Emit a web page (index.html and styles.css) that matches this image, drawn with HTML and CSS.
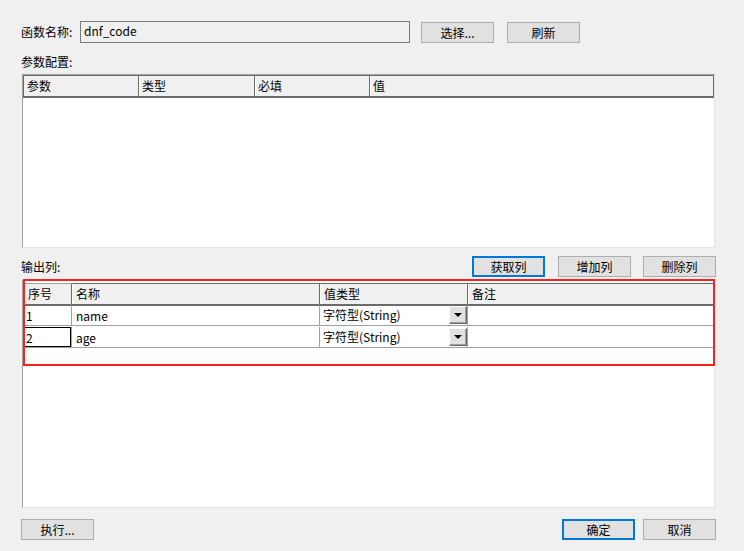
FILE: index.html
```html
<!DOCTYPE html>
<html lang="zh-CN">
<head>
<meta charset="utf-8">
<title>函数</title>
<link rel="stylesheet" href="styles.css">
</head>
<body>
<div class="dialog">
  <div class="row-name">
    <span class="lbl lbl-name">函数名称:</span>
    <div class="input">dnf_code</div>
    <button class="btn btn-select">选择...</button>
    <button class="btn btn-refresh">刷新</button>
  </div>

  <div class="section-label">参数配置:</div>
  <div class="grid-box param-box">
    <div class="param-head">
      <div class="hcell">参数</div>
      <div class="hcell">类型</div>
      <div class="hcell">必填</div>
      <div class="hcell last">值</div>
    </div>
  </div>

  <div class="row-output">
    <span class="lbl">输出列:</span>
    <div class="spacer"></div>
    <button class="btn btn-default">获取列</button>
    <button class="btn btn-add">增加列</button>
    <button class="btn btn-del">删除列</button>
  </div>

  <div class="grid-box out-box">
    <div class="out-grid">
      <div class="ohead first">序号</div>
      <div class="ohead">名称</div>
      <div class="ohead">值类型</div>
      <div class="ohead last">备注</div>

      <div class="ocell">1</div>
      <div class="ocell name">name</div>
      <div class="ocell combo"><span>字符型(String)</span><span class="drop"><span class="tri"></span></span></div>
      <div class="ocell last"></div>

      <div class="ocell focus">2</div>
      <div class="ocell name">age</div>
      <div class="ocell combo"><span>字符型(String)</span><span class="drop"><span class="tri"></span></span></div>
      <div class="ocell last"></div>
    </div>
    <div class="highlight"></div>
  </div>

  <div class="row-bottom">
    <button class="btn btn-exec">执行...</button>
    <div class="spacer"></div>
    <button class="btn btn-default">确定</button>
    <button class="btn btn-cancel">取消</button>
  </div>
</div>
</body>
</html>
```

FILE: styles.css
```css
* { box-sizing: border-box; }

html, body {
  margin: 0;
  padding: 0;
  background: #f0f0f0;
}

body {
  font-family: "Noto Sans CJK SC", "Noto Sans", sans-serif;
  font-size: 12px;
  color: #000;
  width: 744px;
  height: 551px;
  overflow: hidden;
}

.dialog {
  padding: 21px 28px 0 21px;
  display: flex;
  flex-direction: column;
}

.lbl { line-height: 16px; white-space: nowrap; }

.row-name {
  display: flex;
  align-items: center;
  height: 22px;
}

.lbl-name { width: 59px; }

.input {
  width: 330px;
  height: 22px;
  border: 1px solid #7a7a7a;
  background: #f0f0f0;
  padding: 0 3px;
  line-height: 18px;
}

.btn {
  font-family: inherit;
  font-size: 12px;
  color: #000;
  width: 73px;
  height: 21px;
  padding: 0;
  margin: 0;
  background: #e1e1e1;
  border: 1px solid #adadad;
  line-height: 17px;
  text-align: center;
}

.btn-select { margin-left: 11px; }
.btn-refresh { margin-left: 13px; }

.btn-default {
  border: 2px solid #0078d7;
  line-height: 15px;
}

.section-label {
  margin-top: 11px;
  height: 16px;
  line-height: 16px;
}

.grid-box {
  margin-left: 1px;
  width: 693px;
  background: #fff;
  border-top: 1px solid #a0a0a0;
  border-left: 1px solid #a0a0a0;
  border-right: 1px solid #e3e3e3;
  border-bottom: 1px solid #e3e3e3;
}

.param-box {
  margin-top: 4px;
  height: 174px;
}

.param-head {
  display: grid;
  grid-template-columns: 115px 116px 115px 1fr;
  height: 23px;
  background: #f0f0f0;
  border: 1px solid #6b6b6b;
  border-bottom-width: 2px;
}

.hcell {
  padding-left: 3px;
  line-height: 19px;
  border-right: 1px solid #6b6b6b;
  box-shadow: inset 1px 0 0 #fff;
}

.hcell:first-child { box-shadow: none; }
.hcell.last { border-right: none; }

.row-output {
  margin-top: 8px;
  display: flex;
  align-items: center;
  height: 21px;
}

.spacer { flex: 1; }

.btn-add { margin-left: 13px; }
.btn-del { margin-left: 12px; }

.out-box {
  position: relative;
  margin-top: 3px;
  height: 228px;
  padding: 1px 0 0 1px;
}

.out-grid {
  display: grid;
  grid-template-columns: 48px 248px 148px 1fr;
  grid-auto-rows: 22px;
}

.ohead {
  height: 23px;
  margin-top: 1px;
  background: #f0f0f0;
  border-top: 1px solid #6b6b6b;
  border-bottom: 2px solid #6b6b6b;
  border-right: 1px solid #6b6b6b;
  box-shadow: inset 1px 0 0 #fff;
  padding-left: 4px;
  line-height: 19px;
}

.ohead.first { border-top-color: #a0a0a0; }
.ohead.last { border-right: none; }

.ocell {
  margin-top: 1px;
  border-right: 1px solid #a0a0a0;
  border-bottom: 1px solid #a0a0a0;
  padding-left: 2px;
  line-height: 22px;
  white-space: nowrap;
  overflow: hidden;
}

.ocell.name { padding-left: 4px; }
.ocell.last { border-right: none; }

.ocell.focus { box-shadow: inset 0 0 0 1px #000; }

.ocell.combo {
  display: flex;
  align-items: center;
  justify-content: space-between;
  padding-left: 3px;
  padding-right: 0;
}

.drop {
  width: 18px;
  height: 18px;
  background: #e1e1e1;
  border-top: 1px solid #fff;
  border-left: 1px solid #fff;
  border-right: 1px solid #696969;
  border-bottom: 1px solid #696969;
  box-shadow: inset -1px -1px 0 #a0a0a0;
  display: flex;
  align-items: center;
  justify-content: center;
}

.tri {
  width: 0;
  height: 0;
  border-left: 4px solid transparent;
  border-right: 4px solid transparent;
  border-top: 4px solid #000;
}

.highlight {
  position: absolute;
  left: 0;
  top: -2px;
  width: 692px;
  height: 87px;
  border: 2px solid #ff2020;
  pointer-events: none;
}

.row-bottom {
  margin-top: 11px;
  display: flex;
  align-items: center;
  height: 21px;
}

.btn-cancel { margin-left: 8px; }
```
